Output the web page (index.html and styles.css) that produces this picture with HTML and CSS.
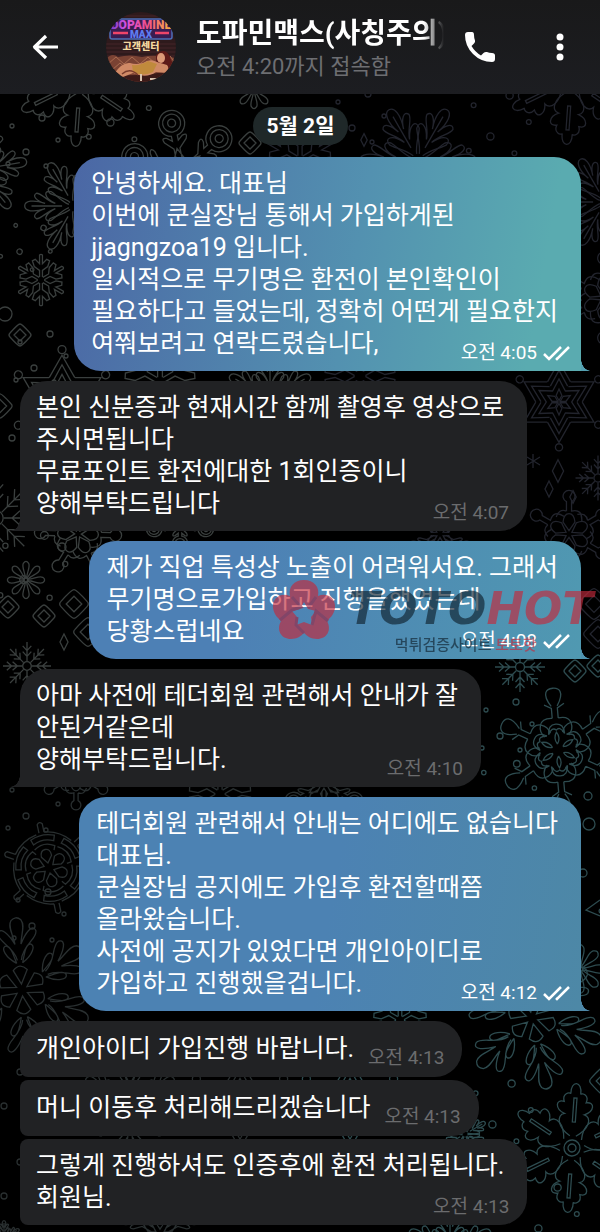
FILE: index.html
```html
<!DOCTYPE html>
<html lang="ko">
<head>
  <meta charset="UTF-8">
  <meta name="viewport" content="width=device-width, initial-scale=1">
  <title>도파민맥스(사칭주의)</title>
  <link rel="stylesheet" href="styles.css">
</head>
<body>
  <header class="topbar">
    <button class="icon-btn back" aria-label="뒤로">
      <svg width="32" height="32" viewBox="0 0 32 32"><path d="M28 16H5M16 5L4.500 16L16 27" fill="none" stroke="#fff" stroke-width="3.200" stroke-linejoin="round"/></svg>
    </button>
    <svg class="avatar" viewBox="0 0 70 70" aria-hidden="true">
      <defs>
        <clipPath id="round"><circle cx="35" cy="35" r="35"/></clipPath>
        <linearGradient id="neon"><stop offset="0" stop-color="#7a3fd0"/><stop offset=".25" stop-color="#d650e0"/><stop offset=".6" stop-color="#f0508a"/><stop offset="1" stop-color="#f7b23c"/></linearGradient>
      </defs>
      <g clip-path="url(#round)">
        <rect width="70" height="70" fill="#2e1a1c"/>
        <path d="M0 4H70M0 8H70M0 32H70M0 36H70M0 40H70M0 44H70" stroke="#442528" stroke-width="1"/>
        <rect x="4" y="7" width="62" height="20" rx="2" fill="#3a1c52" stroke="#4c6fb8" stroke-width="1.500"/>
        <path d="M7 21H22M49 21H63" stroke="#f0456a" stroke-width="2.500"/>
        <text x="35" y="17" class="sign sign-top" fill="url(#neon)">DOPAMINE</text>
        <text x="35" y="26" class="sign sign-max" fill="#5d7df0">MAX</text>
        <text x="35" y="38" class="sign sign-kr" fill="#f3d9a0">고객센터</text>
        <path d="M0 47Q6 40 12 45Q24 42 36 45Q48 42 70 46V70H0Z" fill="#7a4233"/>
        <path d="M2 52L10 45L18 52L26 45L34 52L42 45L50 52M6 58L14 51L22 58M64 44L70 52" fill="none" stroke="#a86c50" stroke-width="1"/>
        <path d="M0 62Q30 66 70 58V70H0Z" fill="#3c1a18"/>
        <path d="M50 43Q58 35 63 43Q66 50 70 58L62 64Q54 56 50 49Z" fill="#5c1a18"/>
        <path d="M8 62Q16 50 24 51Q30 53 37 51Q44 46 51 50L61 53Q64 56 60 61L50 60Q40 67 27 61L12 67Z" fill="#d08a66"/>
        <path d="M26 53Q34 54 42 49L51 52L47 60Q36 65 27 60Z" fill="#c08a3c"/>
        <path d="M16 62Q24 55 32 63" fill="none" stroke="#7a3c2c" stroke-width="1.500"/>
        <ellipse cx="55" cy="46" rx="4" ry="5" fill="#dc9a78"/>
        <path d="M35 62V69M44 67H52" stroke="#d8c3b0" stroke-width="2"/>
      </g>
    </svg>
    <div class="peer">
      <h1 class="peer-name">도파민맥스(사칭주의)</h1>
      <p class="peer-status">오전 4:20까지 접속함</p>
    </div>
    <button class="icon-btn call" aria-label="전화">
      <svg width="32" height="32" viewBox="0 0 32 32"><path d="M1 4Q1 1 4 1H8Q10 1 10 4Q10 7 11 9.500Q11.500 11 10 12.500L7.500 15Q11 21 17 24.500L19.500 22Q21 20.500 23 21Q25 21.800 28 22Q31 22 31 24.500V28Q31 31 28 31Q17 31 9 23Q1 15 1 4Z" fill="#fff"/></svg>
    </button>
    <button class="icon-btn more" aria-label="메뉴">
      <svg width="8" height="28" viewBox="0 0 8 28" fill="#fff"><circle cx="4" cy="4" r="3.500"/><circle cx="4" cy="14" r="3.500"/><circle cx="4" cy="24" r="3.500"/></svg>
    </button>
  </header>

  <main class="chat">
    <!-- snowflake wallpaper, y measured from the top of the chat -->
    <svg class="wallpaper" viewBox="0 0 600 1138" preserveAspectRatio="xMidYMin slice" aria-hidden="true">
      <defs>
        <path id="oak-arm" d="M-3-12C-16-20-18-32-10-34C-20-38-20-48-11-46C-14-54-6-56-5-54C-6-68 6-68 5-54C6-56 14-54 11-46C20-48 20-38 10-34C18-32 16-20 3-12M-1.500-26V-50H1.500V-26Z"/>
        <g id="oak"><circle r="4"/><circle r="8"/>
          <use href="#oak-arm"/><use href="#oak-arm" transform="rotate(60)"/><use href="#oak-arm" transform="rotate(120)"/><use href="#oak-arm" transform="rotate(180)"/><use href="#oak-arm" transform="rotate(240)"/><use href="#oak-arm" transform="rotate(300)"/></g>
        <path id="ring-arm" d="M-3-10V-24L-11-32Q-14-38-8-36L-3-32V-37A13 13 0 1 1 3-37V-32L8-36Q14-38 11-32L3-24V-10M4-50A4 4 0 1 1-4-50A4 4 0 1 1 4-50M9-50A9 9 0 1 1-9-50A9 9 0 1 1 9-50M0-6L5-14L0-24L-5-14Z"/>
        <g id="ring"><use href="#ring-arm"/><use href="#ring-arm" transform="rotate(60)"/><use href="#ring-arm" transform="rotate(120)"/><use href="#ring-arm" transform="rotate(180)"/><use href="#ring-arm" transform="rotate(240)"/><use href="#ring-arm" transform="rotate(300)"/></g>
        <path id="frond-arm" d="M-2-6C-5-14-14-22-17-27C-19-36-10-36-3-22C-6-32-15-38-15-44C-12-50-6-44-3-34C-8-48-6-58 0-58C6-58 8-48 3-34C6-44 12-50 15-44C15-38 6-32 3-22C10-36 19-36 17-27C14-22 5-14 2-6M0-14V-50"/>
        <g id="frond"><use href="#frond-arm"/><use href="#frond-arm" transform="rotate(60)"/><use href="#frond-arm" transform="rotate(120)"/><use href="#frond-arm" transform="rotate(180)"/><use href="#frond-arm" transform="rotate(240)"/><use href="#frond-arm" transform="rotate(300)"/></g>
        <path id="drop-arm" d="M-2-30C-4-44-20-50-19-58C-16-66-8-56-3-46C-4-56-9-64-5-70Q0-75 5-70C9-64 4-56 3-46C8-56 16-66 19-58C20-50 4-44 2-30M0-6L7-20Q0-28-7-20ZM-3-27C-14-34-17-43-13-45C-8-46-6-38-3-27M3-27C14-34 17-43 13-45C8-46 6-38 3-27"/>
        <g id="drop"><use href="#drop-arm"/><use href="#drop-arm" transform="rotate(60)"/><use href="#drop-arm" transform="rotate(120)"/><use href="#drop-arm" transform="rotate(180)"/><use href="#drop-arm" transform="rotate(240)"/><use href="#drop-arm" transform="rotate(300)"/></g>
        <path id="flake-arm" d="M-3-6V-20L-14-28L-18-40L-12-43L-3-34V-52Q0-55 3-52V-34L12-43L18-40L14-28L3-20V-6"/>
        <g id="flake"><use href="#flake-arm"/><use href="#flake-arm" transform="rotate(60)"/><use href="#flake-arm" transform="rotate(120)"/><use href="#flake-arm" transform="rotate(180)"/><use href="#flake-arm" transform="rotate(240)"/><use href="#flake-arm" transform="rotate(300)"/></g>
        <path id="petal" d="M-2-6C-2-20-12-34-7-44Q0-54 7-44C12-34 2-20 2-6Z"/>
        <g id="daisy"><circle r="5"/><use href="#petal"/><use href="#petal" transform="rotate(45)"/><use href="#petal" transform="rotate(90)"/><use href="#petal" transform="rotate(135)"/><use href="#petal" transform="rotate(180)"/><use href="#petal" transform="rotate(225)"/><use href="#petal" transform="rotate(270)"/><use href="#petal" transform="rotate(315)"/></g>
        <path id="bloom-arm" d="M-3-27V-38A7 7 0 1 1 3-38V-27Q16-30 15-15M0-4L7-14Q6-24 0-24Q-6-24-7-14ZM-3-27Q-12-30-15-20"/>
        <g id="bloom"><use href="#bloom-arm"/><use href="#bloom-arm" transform="rotate(60)"/><use href="#bloom-arm" transform="rotate(120)"/><use href="#bloom-arm" transform="rotate(180)"/><use href="#bloom-arm" transform="rotate(240)"/><use href="#bloom-arm" transform="rotate(300)"/></g>
        <path id="star-arm" d="M0-2L4-9L0-18L-4-9ZM-9-15L0-32L9-15M-12-22L0-44L12-22M-16-28L0-56L16-28M5-63A5 5 0 1 1-5-63A5 5 0 1 1 5-63"/>
        <g id="star"><use href="#star-arm"/><use href="#star-arm" transform="rotate(60)"/><use href="#star-arm" transform="rotate(120)"/><use href="#star-arm" transform="rotate(180)"/><use href="#star-arm" transform="rotate(240)"/><use href="#star-arm" transform="rotate(300)"/></g>
        <path id="wheel-arm" d="M-3-42V-52Q0-56 3-52V-42M0-6L6-14Q6-22 0-22Q-6-22-6-14ZM-12-24Q0-32 12-24L10-19M-14-36Q0-42 14-36L12-30Q0-36-12-30ZM3-42Q20-40 32-26"/>
        <g id="wheel"><use href="#wheel-arm"/><use href="#wheel-arm" transform="rotate(60)"/><use href="#wheel-arm" transform="rotate(120)"/><use href="#wheel-arm" transform="rotate(180)"/><use href="#wheel-arm" transform="rotate(240)"/><use href="#wheel-arm" transform="rotate(300)"/></g>
        <path id="twig-arm" d="M0-10V-50M0-20L-9-30M0-20L9-30M0-32L-9-42M0-32L9-42"/>
        <g id="twig"><circle r="9"/><use href="#twig-arm"/><use href="#twig-arm" transform="rotate(45)"/><use href="#twig-arm" transform="rotate(90)"/><use href="#twig-arm" transform="rotate(135)"/><use href="#twig-arm" transform="rotate(180)"/><use href="#twig-arm" transform="rotate(225)"/><use href="#twig-arm" transform="rotate(270)"/><use href="#twig-arm" transform="rotate(315)"/></g>
        <path id="ornate-arm" d="M-3-32C-18-34-18-20-12-14M3-32C18-34 18-20 12-14M-3-32V-42L-10-46M3-32V-42L10-46M-3-44C-12-58-6-62 0-62C6-62 12-58 3-44M0-6Q4-12 0-18Q-4-12 0-6M-8-16Q-8-26 0-26Q8-26 8-16Q4-24 0-20Q-4-24-8-16"/>
        <g id="ornate"><use href="#ornate-arm"/><use href="#ornate-arm" transform="rotate(60)"/><use href="#ornate-arm" transform="rotate(120)"/><use href="#ornate-arm" transform="rotate(180)"/><use href="#ornate-arm" transform="rotate(240)"/><use href="#ornate-arm" transform="rotate(300)"/></g>
        <g id="gem"><path d="M0-11Q2-11 10-2Q12 0 10 2Q2 11 0 11Q-2 11-10 2Q-12 0-10-2Q-2-11 0-11ZM0-6L6 0L0 6L-6 0Z"/></g>
        <path id="spark" d="M0-8L4 0L0 8L-4 0Z"/>
        <g id="dots"><circle cx="-22" cy="-14" r="2"/><circle cx="8" cy="-22" r="3"/><circle cx="24" cy="0" r="2"/><circle cx="-8" cy="12" r="3"/><circle cx="-26" cy="24" r="2"/><circle cx="12" cy="26" r="2"/></g>
      </defs>
      <g class="doodle">
        <use href="#oak" transform="translate(80-12)rotate(4)"/>
        <use href="#ring" transform="translate(182 78)rotate(-12)"/>
        <use href="#frond" transform="translate(74 112)rotate(30)scale(.850)"/>
        <use href="#frond" transform="translate(-22 76)rotate(20)scale(.850)"/>
        <use href="#flake" transform="translate(41 186)scale(.480)"/>
        <use href="#gem" transform="translate(20 241)"/>
        <use href="#star" transform="translate(62 306)scale(.800)"/>
        <use href="#gem" transform="translate(0 312)scale(1.100)"/>
        <use href="#twig" transform="translate(-4 424)scale(.800)"/>
        <use href="#bloom" transform="translate(78 440)rotate(-28)scale(.850)"/>
        <use href="#daisy" transform="translate(26 486)scale(.380)"/>
        <use href="#gem" transform="translate(44 522)"/>
        <use href="#gem" transform="translate(74 510)scale(1.300)"/>
        <use href="#gem" transform="translate(8 513)"/>
        <use href="#gem" transform="translate(88 538)scale(1.300)"/>
        <use href="#spark" transform="translate(64 548)"/>
        <use href="#twig" transform="translate(27 572)scale(.480)"/>
        <use href="#flake" transform="translate(160 288)scale(.800)"/>
        <use href="#frond" transform="translate(270 305)scale(.800)"/>
        <use href="#ring" transform="translate(180 420)scale(.600)"/>
        <use href="#gem" transform="translate(250 49)"/>
        <use href="#daisy" transform="translate(254-4)scale(.380)"/>
        <use href="#dots" transform="translate(34 46)"/>
        <use href="#dots" transform="translate(120 14)scale(1.200)"/>
        <use href="#dots" transform="translate(30 150)rotate(20)scale(.900)"/>
        <use href="#dots" transform="translate(42 262)"/>
        <circle cx="5" cy="220" r="7"/><circle cx="62" cy="453" r="4"/><circle cx="12" cy="344" r="3"/>
        <use href="#dots" transform="translate(34 470)scale(1.300)"/>
      </g>
      <g class="doodle doodle-low">
        <use href="#wheel" transform="translate(49 774)rotate(-12)scale(.860)"/>
        <use href="#drop" transform="translate(22 896)rotate(-5)"/>
        <use href="#bloom" transform="translate(76 680)rotate(180)scale(.700)"/>
        <use href="#dots" transform="translate(34 710)"/>
        <use href="#dots" transform="translate(40 820)"/>
        <use href="#dots" transform="translate(12 1000)"/>
        <use href="#dots" transform="translate(12 1090)"/>
        <use href="#frond" transform="translate(4 1144)scale(.300)"/>
        <use href="#ring" transform="translate(160 1140)scale(.800)"/>
        <use href="#flake" transform="translate(220 700)scale(.700)"/>
        <use href="#ring" transform="translate(324 690)scale(.700)"/>
        <use href="#star" transform="translate(240 1010)scale(.800)"/>
        <use href="#drop" transform="translate(130 1010)scale(.700)"/>
      </g>
      <g class="doodle doodle-far">
        <use href="#oak" transform="translate(571-14)rotate(4)"/>
        <use href="#frond" transform="translate(418 66)rotate(30)"/>
        <use href="#flake" transform="translate(300 66)scale(.700)"/>
        <use href="#frond" transform="translate(605 108)rotate(30)scale(.850)"/>
        <use href="#bloom" transform="translate(604 204)scale(.900)"/>
        <use href="#star" transform="translate(559 308)scale(.720)"/>
        <use href="#flake" transform="translate(360 282)scale(.800)"/>
        <use href="#twig" transform="translate(598 384)scale(.450)"/>
        <use href="#bloom" transform="translate(569 440)scale(.850)"/>
        <use href="#ring" transform="translate(440 440)scale(.600)"/>
        <use href="#spark" transform="translate(558 377)scale(1.400)"/>
        <use href="#spark" transform="translate(549 395)"/><use href="#spark" transform="translate(573 403)scale(.800)"/>
        <use href="#spark" transform="translate(364 46)scale(.800)"/>
        <path d="M533 360V374M527 363L540 371M540 363L527 371"/>
        <use href="#dots" transform="translate(360 22)"/>
        <use href="#dots" transform="translate(500 28)scale(1.200)"/>
        <use href="#gem" transform="translate(594 510)scale(1.400)"/>
        <use href="#gem" transform="translate(598 540)scale(1.300)"/>
      </g>
      <g class="doodle doodle-teal">
        <use href="#twig" transform="translate(520 573)scale(.500)"/>
        <use href="#gem" transform="translate(575 577)"/><use href="#gem" transform="translate(598 572)"/>
        <use href="#ornate" transform="translate(558 656)rotate(-5)"/>
        <use href="#dots" transform="translate(508 630)"/>
        <use href="#dots" transform="translate(508 694)scale(1.100)"/>
        <circle cx="588" cy="702" r="4"/><circle cx="589" cy="730" r="6"/><circle cx="583" cy="779" r="4"/>
        <path d="M600 806L586 816L600 822M600 815A3 3 0 0 0 600 819"/>
        <use href="#daisy" transform="translate(580 875)scale(.500)"/>
        <use href="#drop" transform="translate(532 924)rotate(-12)"/>
        <use href="#oak" transform="translate(572 1054)rotate(4)"/>
        <use href="#frond" transform="translate(465 1040)scale(.400)"/>
        <use href="#gem" transform="translate(604 987)scale(1.300)"/>
        <use href="#dots" transform="translate(502 1016)scale(1.200)"/>
        <use href="#star" transform="translate(350 1010)scale(.800)"/>
        <use href="#dots" transform="translate(548 1120)scale(1.200)"/>
        <use href="#frond" transform="translate(450 1160)scale(.800)"/>
        <use href="#flake" transform="translate(400 926)scale(.600)"/>
      </g>
    </svg>

    <time class="day">5월 2일</time>

    <ol class="messages">
      <li class="msg out out-bright tail">
        <p class="text">안녕하세요. 대표님<br>이번에 쿤실장님 통해서 가입하게된<br>jjagngzoa19 입니다.<br>일시적으로 무기명은 환전이 본인확인이<br>필요하다고 들었는데, 정확히 어떤게 필요한지<br>여쭤보려고 연락드렸습니다,</p>
        <span class="meta">오전 4:05 <svg class="ticks" viewBox="0 0 28 16"><path d="M1 9L6 14L18 2M13 13L14 14L26 2"/></svg></span>
      </li>
      <li class="msg in tail">
        <p class="text">본인 신분증과 현재시간 함께 촬영후 영상으로<br>주시면됩니다<br>무료포인트 환전에대한 1회인증이니<br>양해부탁드립니다</p>
        <span class="meta">오전 4:07</span>
      </li>
      <li class="msg out out-mid tail">
        <p class="text">제가 직업 특성상 노출이 어려워서요. 그래서<br>무기명으로가입하고 진행을했었는데<br>당황스럽네요</p>
        <span class="meta">오전 4:08 <svg class="ticks" viewBox="0 0 28 16"><path d="M1 9L6 14L18 2M13 13L14 14L26 2"/></svg></span>
        <div class="watermark">
          <svg class="mark" viewBox="0 0 64 62" aria-hidden="true">
            <path fill-rule="evenodd" d="M32 1C42 1 48 8 46 17C56 13 64 20 63 29C62 36 57 40 55 42C60 51 55 60 45 60C39 60 35 57 32 54C29 57 25 60 19 60C9 60 4 51 9 42C7 40 2 36 1 29C0 20 8 13 18 17C16 8 22 1 32 1ZM32 23L28 30L20 32L25 38L24 46L32 43L40 46L39 38L44 32L36 30Z" fill="#c42a3c"/>
            <path d="M20 18L29 28L20 31L8 41M44 18L36 29M56 42L44 32L40 46M32 54L24 46L25 38" fill="none" stroke="#9e2440" stroke-width="3"/>
          </svg>
          <div class="brand">
            <strong class="brand-name">TOTO<em>HOT</em></strong>
            <span class="brand-sub">먹튀검증사이트 <em>토토핫</em></span>
          </div>
        </div>
      </li>
      <li class="msg in tail">
        <p class="text">아마 사전에 테더회원 관련해서 안내가 잘<br>안된거같은데<br>양해부탁드립니다.</p>
        <span class="meta">오전 4:10</span>
      </li>
      <li class="msg out out-deep tail">
        <p class="text">테더회원 관련해서 안내는 어디에도 없습니다<br>대표님.<br>쿤실장님 공지에도 가입후 환전할때쯤<br>올라왔습니다.<br>사전에 공지가 있었다면 개인아이디로<br>가입하고 진행했을겁니다.</p>
        <span class="meta">오전 4:12 <svg class="ticks" viewBox="0 0 28 16"><path d="M1 9L6 14L18 2M13 13L14 14L26 2"/></svg></span>
      </li>
      <li class="msg in short">
        <p class="text">개인아이디 가입진행 바랍니다.</p>
        <span class="meta">오전 4:13</span>
      </li>
      <li class="msg in short joined">
        <p class="text">머니 이동후 처리해드리겠습니다</p>
        <span class="meta">오전 4:13</span>
      </li>
      <li class="msg in joined">
        <p class="text">그렇게 진행하셔도 인증후에 환전 처리됩니다.<br>회원님.</p>
        <span class="meta">오전 4:13</span>
      </li>
    </ol>
  </main>
</body>
</html>
```
FILE: styles.css
```css
* {
  box-sizing: border-box;
}

body {
  margin: 0;
  min-height: 100vh;
  display: flex;
  flex-direction: column;
  background: #000;
  color: #fff;
  font-family: Roboto, "Noto Sans CJK KR", sans-serif;
}

h1, p, ol {
  margin: 0;
  padding: 0;
  font-weight: 400;
}

/* top bar */
.topbar {
  height: 94px;
  padding: 0 22px 0 30px;
  display: flex;
  align-items: center;
  background: linear-gradient(#19191a, #1c1d21);
}

.icon-btn {
  display: flex;
  align-items: center;
  justify-content: center;
  padding: 0;
  border: none;
  background: none;
  cursor: pointer;
}

.back {
  margin-right: 44px;
}

.avatar {
  flex: none;
  width: 70px;
  height: 70px;
  margin-right: 20px;
}

.sign {
  font-family: Roboto, "Noto Sans CJK KR", sans-serif;
  font-weight: 900;
  text-anchor: middle;
}

.sign-top {
  font-size: 12px;
}

.sign-max {
  font-size: 10px;
}

.sign-kr {
  font-size: 10px;
}

.peer {
  flex: 1;
  min-width: 0;
  padding-top: 4px;
}

.peer-name {
  overflow: hidden;
  white-space: nowrap;
  font-size: 28px;
  line-height: 36px;
  font-weight: 700;
  -webkit-mask-image: linear-gradient(90deg, #000 calc(100% - 20px), transparent);
  mask-image: linear-gradient(90deg, #000 calc(100% - 20px), transparent);
}

.peer-status {
  font-size: 22px;
  line-height: 30px;
  color: #6d6e72;
}

.call {
  margin-left: 20px;
  margin-right: 56px;
}

.more {
  width: 16px;
  margin-right: 10px;
}

/* chat */
.chat {
  position: relative;
  flex: 1;
  display: flex;
  flex-direction: column;
  padding: 13px 19px 4px 20px;
  overflow: hidden;
}

.wallpaper {
  position: absolute;
  top: 0;
  left: 0;
  width: 100%;
  height: 100%;
}

.wallpaper path,
.wallpaper circle {
  vector-effect: non-scaling-stroke;
}

.doodle {
  fill: none;
  stroke: #3a3f3e;
  stroke-width: 1.3;
}

.doodle-low {
  stroke: #292f30;
}

.doodle-far {
  stroke: #22242d;
}

.doodle-teal {
  stroke: #2d4b4f;
}

.day {
  position: relative;
  align-self: center;
  padding: 0 14px;
  border-radius: 19px;
  background: #1f2829;
  font-size: 21px;
  line-height: 38px;
  font-weight: 700;
}

.messages {
  position: relative;
  display: flex;
  flex-direction: column;
  gap: 10px;
  margin-top: 12px;
  list-style: none;
}

.msg {
  position: relative;
  display: grid;
  padding: 11px 18px 6px 16px;
  border-radius: 27px;
}

.text {
  grid-area: 1 / 1;
  padding-bottom: 5px;
  font-size: 25px;
  line-height: 32px;
  white-space: nowrap;
}

.meta {
  grid-area: 1 / 1;
  align-self: end;
  justify-self: end;
  display: flex;
  align-items: center;
  gap: 6px;
  font-size: 19px;
  line-height: 24px;
  white-space: nowrap;
}

.in {
  align-self: flex-start;
  background: #212224;
}

.in .text {
  padding-right: 5px;
}

.in .meta {
  color: #6b6c6e;
}

.out {
  align-self: flex-end;
  padding-right: 10px;
  padding-left: 17px;
}

.out .text {
  padding-right: 13px;
}

.out-bright {
  background: linear-gradient(100deg, #4b67a5, #5391b0 55%, #5aabb0 90%);
  --tail: #54a0b1;
}

.out-mid {
  background: linear-gradient(100deg, #4d80b5 30%, #5099b1);
  --tail: #4e92b0;
}

.out-deep {
  background: linear-gradient(100deg, #4c82b3 50%, #4d88a6);
  --tail: #4d87a8;
}

.ticks {
  width: 28px;
  height: 16px;
  fill: none;
  stroke: #fff;
  stroke-width: 2.5;
}

.tail::after {
  content: "";
  position: absolute;
  bottom: 0;
  width: 10px;
  height: 12px;
}

.out.tail {
  border-bottom-right-radius: 0;
}

.out.tail::after {
  right: -10px;
  background: radial-gradient(10px 12px at 100% 0, transparent 96%, var(--tail));
}

.in.tail {
  border-bottom-left-radius: 0;
}

.in.tail::after {
  left: -10px;
  background: radial-gradient(10px 12px at 0 0, transparent 96%, #212224);
}

.short {
  display: flex;
  align-items: flex-end;
  gap: 9px;
  padding-top: 12px;
  padding-bottom: 7px;
  border-bottom-left-radius: 8px;
}

.joined {
  margin-top: -7px;
  border-top-left-radius: 8px;
  border-bottom-left-radius: 8px;
}

/* review site stamp */
.watermark {
  position: absolute;
  right: -12px;
  bottom: 0;
  z-index: 1;
  display: flex;
  align-items: flex-start;
  gap: 12px;
  opacity: 0.65;
  color: #10222f;
}

.mark {
  width: 64px;
  height: 62px;
  margin-top: -8px;
}

.brand {
  display: flex;
  flex-direction: column;
  align-items: center;
}

.brand em {
  color: #c42a3c;
}

.brand-name {
  font-family: "DejaVu Sans", sans-serif;
  font-size: 45px;
  line-height: 44px;
  font-style: italic;
}

.brand-sub {
  padding-right: 10px;
  font-size: 15px;
  line-height: 28px;
  font-weight: 500;
}

.brand-sub em {
  font-style: normal;
}
```
